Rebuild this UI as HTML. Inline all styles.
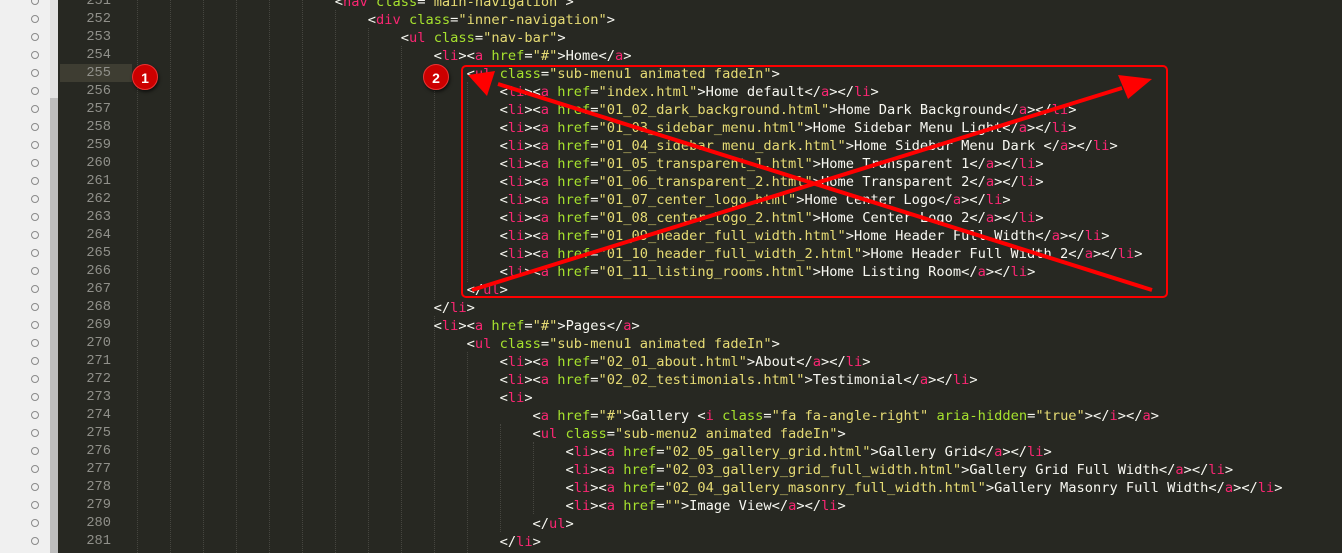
<!DOCTYPE html>
<html style="width:1342px;height:553px;overflow:hidden"><head><meta charset="utf-8"><style>
body{margin:0;width:1342px;height:553px;overflow:hidden;background:#272822;position:relative;font-family:"Liberation Mono",monospace}
#left{position:absolute;left:0;top:0;width:50px;height:553px;background:#f0f0f0}
.c{position:absolute;left:31px;width:8px;height:8px;border:1.5px solid #8a8a8a;border-radius:50%;box-sizing:border-box}
#sb{position:absolute;left:50px;top:0;width:8px;height:553px;background:#e2e2e2}
#th{position:absolute;left:50px;top:98px;width:8px;height:455px;background:#bdbdbd}
#cur{position:absolute;left:60px;top:64px;width:72px;height:18px;background:#3e3d32}
.ln{position:absolute;left:60px;width:51px;text-align:right;color:#90908a;font-size:13.7px;line-height:18px}
.g{position:absolute;top:0;bottom:0;border-left:1px dotted #464640}
#code{position:absolute;left:137px;top:-7px;font-size:13.7px;line-height:18px;color:#f8f8f2;white-space:pre;margin:0}
.t{color:#f92672}.a{color:#a6e22e}.s{color:#e6db74}
.b{position:absolute;width:26px;height:26px;border-radius:50%;background:#c00;border:1.5px solid #e33;box-shadow:1px 2px 3px rgba(0,0,0,.6);color:#fff;font:bold 14px "Liberation Sans",sans-serif;text-align:center;line-height:26px;box-sizing:border-box}
</style></head><body>
<div id="left"></div>
<div id="sb"></div><div id="th"></div>
<div id="cur"></div>
<div class="g" style="left:137px"></div><div class="g" style="left:170px"></div><div class="g" style="left:203px"></div><div class="g" style="left:236px"></div><div class="g" style="left:269px"></div><div class="g" style="left:302px"></div>
<div class="g" style="left:335px;top:10px"></div><div class="g" style="left:368px;top:28px"></div><div class="g" style="left:401px;top:46px"></div><div class="g" style="left:434px;top:64px;bottom:auto;height:236px"></div><div class="g" style="left:434px;top:316px"></div><div class="g" style="left:467px;top:82px;bottom:auto;height:200px"></div><div class="g" style="left:467px;top:352px"></div><div class="g" style="left:500px;top:424px;bottom:auto;height:108px"></div><div class="g" style="left:533px;top:442px;bottom:auto;height:72px"></div>
<pre id="code">                        &lt;<span class="t">nav</span> <span class="a">class</span>=<span class="s">"main-navigation"</span>&gt;
                            &lt;<span class="t">div</span> <span class="a">class</span>=<span class="s">"inner-navigation"</span>&gt;
                                &lt;<span class="t">ul</span> <span class="a">class</span>=<span class="s">"nav-bar"</span>&gt;
                                    &lt;<span class="t">li</span>&gt;&lt;<span class="t">a</span> <span class="a">href</span>=<span class="s">"#"</span>&gt;Home&lt;/<span class="t">a</span>&gt;
                                        &lt;<span class="t">ul</span> <span class="a">class</span>=<span class="s">"sub-menu1 animated fadeIn"</span>&gt;
                                            &lt;<span class="t">li</span>&gt;&lt;<span class="t">a</span> <span class="a">href</span>=<span class="s">"index.html"</span>&gt;Home default&lt;/<span class="t">a</span>&gt;&lt;/<span class="t">li</span>&gt;
                                            &lt;<span class="t">li</span>&gt;&lt;<span class="t">a</span> <span class="a">href</span>=<span class="s">"01_02_dark_background.html"</span>&gt;Home Dark Background&lt;/<span class="t">a</span>&gt;&lt;/<span class="t">li</span>&gt;
                                            &lt;<span class="t">li</span>&gt;&lt;<span class="t">a</span> <span class="a">href</span>=<span class="s">"01_03_sidebar_menu.html"</span>&gt;Home Sidebar Menu Light&lt;/<span class="t">a</span>&gt;&lt;/<span class="t">li</span>&gt;
                                            &lt;<span class="t">li</span>&gt;&lt;<span class="t">a</span> <span class="a">href</span>=<span class="s">"01_04_sidebar_menu_dark.html"</span>&gt;Home Sidebar Menu Dark &lt;/<span class="t">a</span>&gt;&lt;/<span class="t">li</span>&gt;
                                            &lt;<span class="t">li</span>&gt;&lt;<span class="t">a</span> <span class="a">href</span>=<span class="s">"01_05_transparent_1.html"</span>&gt;Home Transparent 1&lt;/<span class="t">a</span>&gt;&lt;/<span class="t">li</span>&gt;
                                            &lt;<span class="t">li</span>&gt;&lt;<span class="t">a</span> <span class="a">href</span>=<span class="s">"01_06_transparent_2.html"</span>&gt;Home Transparent 2&lt;/<span class="t">a</span>&gt;&lt;/<span class="t">li</span>&gt;
                                            &lt;<span class="t">li</span>&gt;&lt;<span class="t">a</span> <span class="a">href</span>=<span class="s">"01_07_center_logo.html"</span>&gt;Home Center Logo&lt;/<span class="t">a</span>&gt;&lt;/<span class="t">li</span>&gt;
                                            &lt;<span class="t">li</span>&gt;&lt;<span class="t">a</span> <span class="a">href</span>=<span class="s">"01_08_center_logo_2.html"</span>&gt;Home Center Logo 2&lt;/<span class="t">a</span>&gt;&lt;/<span class="t">li</span>&gt;
                                            &lt;<span class="t">li</span>&gt;&lt;<span class="t">a</span> <span class="a">href</span>=<span class="s">"01_09_header_full_width.html"</span>&gt;Home Header Full Width&lt;/<span class="t">a</span>&gt;&lt;/<span class="t">li</span>&gt;
                                            &lt;<span class="t">li</span>&gt;&lt;<span class="t">a</span> <span class="a">href</span>=<span class="s">"01_10_header_full_width_2.html"</span>&gt;Home Header Full Width 2&lt;/<span class="t">a</span>&gt;&lt;/<span class="t">li</span>&gt;
                                            &lt;<span class="t">li</span>&gt;&lt;<span class="t">a</span> <span class="a">href</span>=<span class="s">"01_11_listing_rooms.html"</span>&gt;Home Listing Room&lt;/<span class="t">a</span>&gt;&lt;/<span class="t">li</span>&gt;
                                        &lt;/<span class="t">ul</span>&gt;
                                    &lt;/<span class="t">li</span>&gt;
                                    &lt;<span class="t">li</span>&gt;&lt;<span class="t">a</span> <span class="a">href</span>=<span class="s">"#"</span>&gt;Pages&lt;/<span class="t">a</span>&gt;
                                        &lt;<span class="t">ul</span> <span class="a">class</span>=<span class="s">"sub-menu1 animated fadeIn"</span>&gt;
                                            &lt;<span class="t">li</span>&gt;&lt;<span class="t">a</span> <span class="a">href</span>=<span class="s">"02_01_about.html"</span>&gt;About&lt;/<span class="t">a</span>&gt;&lt;/<span class="t">li</span>&gt;
                                            &lt;<span class="t">li</span>&gt;&lt;<span class="t">a</span> <span class="a">href</span>=<span class="s">"02_02_testimonials.html"</span>&gt;Testimonial&lt;/<span class="t">a</span>&gt;&lt;/<span class="t">li</span>&gt;
                                            &lt;<span class="t">li</span>&gt;
                                                &lt;<span class="t">a</span> <span class="a">href</span>=<span class="s">"#"</span>&gt;Gallery &lt;<span class="t">i</span> <span class="a">class</span>=<span class="s">"fa fa-angle-right"</span> <span class="a">aria-hidden</span>=<span class="s">"true"</span>&gt;&lt;/<span class="t">i</span>&gt;&lt;/<span class="t">a</span>&gt;
                                                &lt;<span class="t">ul</span> <span class="a">class</span>=<span class="s">"sub-menu2 animated fadeIn"</span>&gt;
                                                    &lt;<span class="t">li</span>&gt;&lt;<span class="t">a</span> <span class="a">href</span>=<span class="s">"02_05_gallery_grid.html"</span>&gt;Gallery Grid&lt;/<span class="t">a</span>&gt;&lt;/<span class="t">li</span>&gt;
                                                    &lt;<span class="t">li</span>&gt;&lt;<span class="t">a</span> <span class="a">href</span>=<span class="s">"02_03_gallery_grid_full_width.html"</span>&gt;Gallery Grid Full Width&lt;/<span class="t">a</span>&gt;&lt;/<span class="t">li</span>&gt;
                                                    &lt;<span class="t">li</span>&gt;&lt;<span class="t">a</span> <span class="a">href</span>=<span class="s">"02_04_gallery_masonry_full_width.html"</span>&gt;Gallery Masonry Full Width&lt;/<span class="t">a</span>&gt;&lt;/<span class="t">li</span>&gt;
                                                    &lt;<span class="t">li</span>&gt;&lt;<span class="t">a</span> <span class="a">href</span>=<span class="s">""</span>&gt;Image View&lt;/<span class="t">a</span>&gt;&lt;/<span class="t">li</span>&gt;
                                                &lt;/<span class="t">ul</span>&gt;
                                            &lt;/<span class="t">li</span>&gt;</pre>
<div class="ln" style="top:-7px">251<br>252<br>253<br>254<br>255<br>256<br>257<br>258<br>259<br>260<br>261<br>262<br>263<br>264<br>265<br>266<br>267<br>268<br>269<br>270<br>271<br>272<br>273<br>274<br>275<br>276<br>277<br>278<br>279<br>280<br>281</div>
<div class="c" style="top:-3px"></div><div class="c" style="top:15px"></div><div class="c" style="top:33px"></div><div class="c" style="top:51px"></div><div class="c" style="top:69px"></div><div class="c" style="top:87px"></div><div class="c" style="top:105px"></div><div class="c" style="top:123px"></div><div class="c" style="top:141px"></div><div class="c" style="top:159px"></div><div class="c" style="top:177px"></div><div class="c" style="top:195px"></div><div class="c" style="top:213px"></div><div class="c" style="top:231px"></div><div class="c" style="top:249px"></div><div class="c" style="top:267px"></div><div class="c" style="top:285px"></div><div class="c" style="top:303px"></div><div class="c" style="top:321px"></div><div class="c" style="top:339px"></div><div class="c" style="top:357px"></div><div class="c" style="top:375px"></div><div class="c" style="top:393px"></div><div class="c" style="top:411px"></div><div class="c" style="top:429px"></div><div class="c" style="top:447px"></div><div class="c" style="top:465px"></div><div class="c" style="top:483px"></div><div class="c" style="top:501px"></div><div class="c" style="top:519px"></div><div class="c" style="top:537px"></div>
<svg style="position:absolute;left:0;top:0" width="1342" height="553">
<rect x="462" y="66" width="705" height="231" rx="4" fill="none" stroke="#f00" stroke-width="2"/>
<g stroke="#f00" stroke-width="4" fill="#f00">
<line x1="472" y1="290" x2="1122" y2="88"/>
<polygon points="1152,79 1118,75 1128,99" stroke="none"/>
<line x1="1152" y1="290" x2="498" y2="84"/>
<polygon points="468,75 495,71 487,96" stroke="none"/>
</g>
</svg>
<div class="b" style="left:132px;top:64px">1</div>
<div class="b" style="left:423px;top:64px">2</div>
</body></html>
